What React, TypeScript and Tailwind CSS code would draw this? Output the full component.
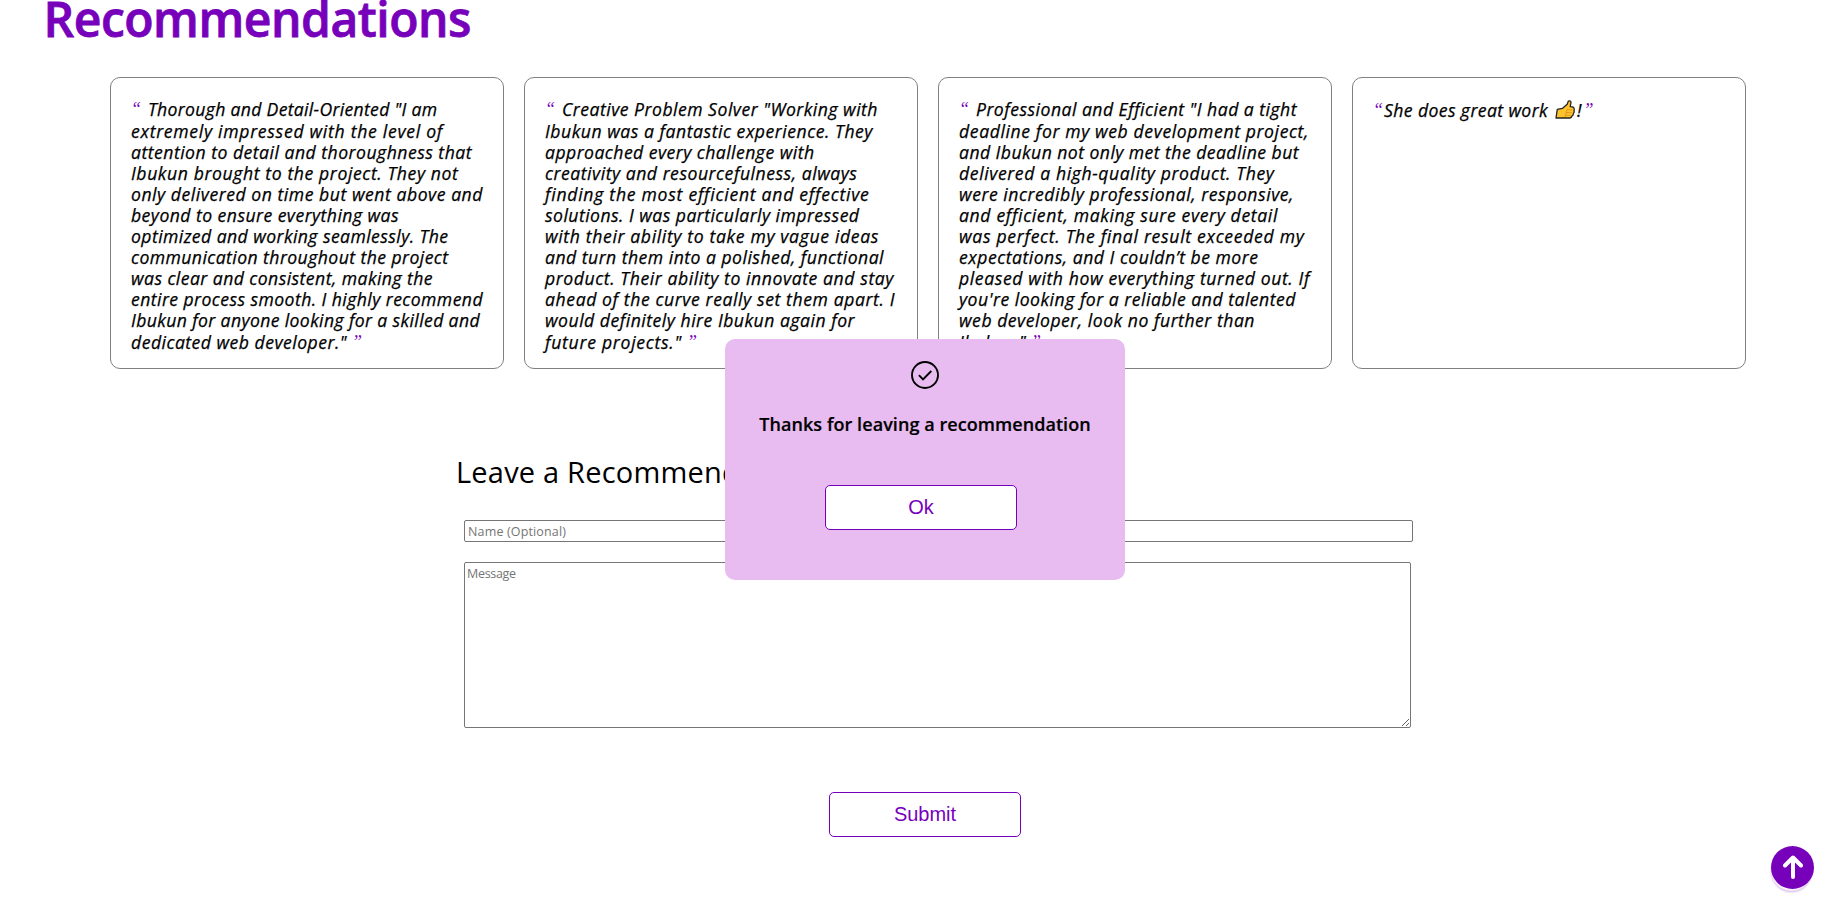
import { useLayoutEffect, useRef } from "react";
import { clsx } from "clsx";

type FitProps = { text: string; width: number; className?: string };

/** One line of text whose letter spacing is set so that it spans `width` pixels. */
function Fit({ text, width, className }: FitProps) {
  const ref = useRef<HTMLSpanElement>(null);
  useLayoutEffect(() => {
    const el = ref.current;
    if (!el) return;
    el.style.letterSpacing = "0px";
    const natural = el.getBoundingClientRect().width;
    el.style.letterSpacing = `${(width - natural) / text.length}px`;
  }, [text, width]);
  return (
    <span ref={ref} className={clsx("inline-block whitespace-pre", className)}>
      {text}
    </span>
  );
}

type Line = [text: string, width: number];

const reviews: Line[][] = [
  [
    ['Thorough and Detail-Oriented "I am', 289.5],
    ["extremely impressed with the level of", 312],
    ["attention to detail and thoroughness that", 341],
    ["Ibukun brought to the project. They not", 327.5],
    ["only delivered on time but went above and", 352],
    ["beyond to ensure everything was", 268],
    ["optimized and working seamlessly. The", 317.5],
    ["communication throughout the project", 317.5],
    ["was clear and consistent, making the", 302],
    ["entire process smooth. I highly recommend", 352],
    ["Ibukun for anyone looking for a skilled and", 349],
    ['dedicated web developer."', 216],
  ],
  [
    ['Creative Problem Solver "Working with', 316],
    ["Ibukun was a fantastic experience. They", 328],
    ["approached every challenge with", 269.5],
    ["creativity and resourcefulness, always", 312.5],
    ["finding the most efficient and effective", 324.5],
    ["solutions. I was particularly impressed", 314.5],
    ["with their ability to take my vague ideas", 334],
    ["and turn them into a polished, functional", 339],
    ["product. Their ability to innovate and stay", 349],
    ["ahead of the curve really set them apart. I", 350],
    ["would definitely hire Ibukun again for", 310],
    ['future projects."', 137],
  ],
  [
    ['Professional and Efficient "I had a tight', 321],
    ["deadline for my web development project,", 350],
    ["and Ibukun not only met the deadline but", 340],
    ["delivered a high-quality product. They", 315.5],
    ["were incredibly professional, responsive,", 335],
    ["and efficient, making sure every detail", 319],
    ["was perfect. The final result exceeded my", 345.5],
    ["expectations, and I couldn’t be more", 299.5],
    ["pleased with how everything turned out. If", 351],
    ["you're looking for a reliable and talented", 337],
    ["web developer, look no further than", 296],
    ['Ibukun."', 67],
  ],
];

const quote =
  "font-['Liberation_Serif',serif] text-[18px] leading-[20px] font-normal text-[#7700bb] [-webkit-text-stroke:0px]";
const card =
  "h-[292px] w-[394px] rounded-[10px] border border-[#808080] px-5 pt-[21px] text-[17.6px] leading-[21px] font-medium italic [-webkit-text-stroke:0.25px]";

function Review({ lines }: { lines: Line[] }) {
  const last = lines.length - 1;
  return (
    <article className={card}>
      {lines.map(([text, width], i) => (
        <div key={text} className={clsx("flex", i === 0 || i === last ? "h-[22px]" : "h-[21px]", i === last && "pt-px")}>
          {i === 0 && <span className={clsx(quote, "w-[17px]")}>“</span>}
          <Fit text={text} width={width} />
          {i === last && <span className={clsx(quote, "pl-[5px]")}>”</span>}
        </div>
      ))}
    </article>
  );
}

function ThumbsUp() {
  return (
    <svg viewBox="0 0 20 19" className="mr-0.5 ml-[7px] h-[19px] w-5" role="img" aria-label="👍">
      <path
        d="M1 18 L2.3 9.3 L7.3 8.4 L12.2 4.2 L13.4 1 Q15.8 .2 16 2.6 L15.2 6.6 L18 7 Q19.8 8.4 19 10.4 Q19.6 12 18.4 13.4 Q18.4 15.2 17 16 Q16.6 17.8 14.8 18 Z"
        fill="#ffc32e"
        stroke="#222"
        strokeWidth="1.3"
        strokeLinejoin="round"
      />
      <path d="M12 9.7 L17.5 10 M11 12.5 L17 12.7 M10.6 15.2 L16 15.4 M12 9.7 L10 17" fill="none" stroke="#d68a13" strokeWidth=".7" />
    </svg>
  );
}

const button =
  "h-[45px] w-[192px] rounded-[5px] border border-[#7700bb] bg-white pb-0.5 font-['Liberation_Sans',sans-serif] text-[20px] text-[#7700bb]";

export default function App() {
  return (
    <main className="relative h-[905px] w-full overflow-hidden bg-white font-['Open_Sans','Noto_Sans',sans-serif] text-black">
      <h1 className="h-[77px] pl-[43.5px] text-[48px] leading-[37px] font-semibold text-[#7700bb] [-webkit-text-stroke:0.8px]">
        <Fit text="Recommendations" width={427.5} />
      </h1>

      <section className="flex gap-5 pl-[110px]">
        {reviews.map((lines) => (
          <Review key={lines[0][0]} lines={lines} />
        ))}
        <article className={card}>
          <div className="flex h-[22px] pt-px">
            <span className={clsx(quote, "w-[11px]")}>“</span>
            <Fit text="She does great work" width={164} />
            <ThumbsUp />
            <span>!</span>
            <span className={clsx(quote, "pl-0.5")}>”</span>
          </div>
        </article>
      </section>

      <form className="flex flex-col pt-[82px] pl-[456px]" onSubmit={(e) => e.preventDefault()}>
        <h2 className="h-[69px] text-[29px] leading-[42px]">
          <Fit text="Leave a Recommendation" width={354} />
        </h2>
        <input
          placeholder="Name (Optional)"
          className="ml-2 h-[22px] w-[949px] rounded-[2px] border border-[#767676] px-[3px] text-[12.5px] tracking-[0.15px] placeholder:text-[#757575]"
        />
        <textarea
          placeholder="Message"
          className="mt-5 ml-2 h-[166px] w-[947px] resize rounded-[2px] border border-[#767676] px-0.5 py-0.5 text-[12.5px] leading-[17px] tracking-[-0.3px] placeholder:text-[#757575]"
        />
        <button className={clsx(button, "mt-16 ml-[373px]")}>Submit</button>
      </form>

      <div
        role="dialog"
        className="absolute top-[339px] left-[725px] flex h-[241px] w-[400px] flex-col items-center rounded-[10px] bg-[#e8bcf0] pt-[22px]"
      >
        <svg viewBox="0 0 28 28" className="size-7" fill="none" stroke="#000" strokeWidth="1.9">
          <circle cx="14" cy="14" r="13" />
          <path d="M7.9 14.2 L12 18.3 L20.3 10" />
        </svg>
        <p className="mt-[21px] h-[75px] text-[18px] leading-7 font-semibold [-webkit-text-stroke:0.2px]">
          <Fit text="Thanks for leaving a recommendation" width={331.5} />
        </p>
        <button className={clsx(button, "mr-2")}>Ok</button>
      </div>

      <button
        aria-label="Back to top"
        className="absolute top-[845.5px] left-[1771px] flex size-[43px] items-center justify-center rounded-full bg-[#7700bb] shadow-[-1px_3px_2px_-1px_#fff,-1px_4px_2px_-1px_#c9a0e4]"
      >
        <svg viewBox="0 0 24 24" className="size-6" fill="none" stroke="#fff" strokeWidth="4" strokeLinecap="round" strokeLinejoin="round">
          <path d="M12 22 V3 M4 10.5 L12 2.5 L20 10.5" />
        </svg>
      </button>
    </main>
  );
}
